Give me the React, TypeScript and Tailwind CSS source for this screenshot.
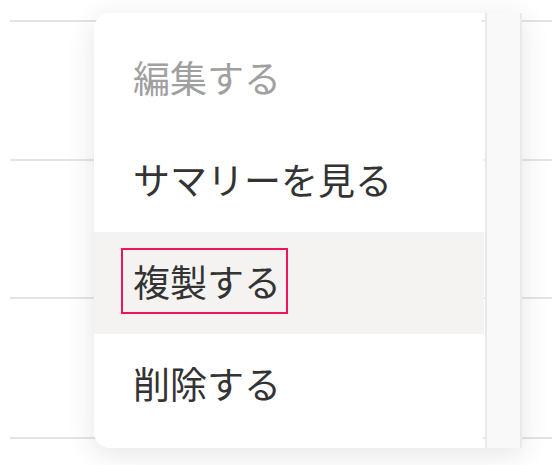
export default function App() {
  const items = [
    { label: "編集する", disabled: true },
    { label: "サマリーを見る" },
    { label: "複製する", focused: true },
    { label: "削除する" },
  ];

  return (
    <div
      className="relative w-[552px] h-[465px] overflow-hidden bg-white"
      style={{ fontFamily: '"Noto Sans CJK JP", "Noto Sans", sans-serif' }}
    >
      {/* background list rows */}
      <div className="pl-[10px] pt-[20px] flex flex-col">
        <div className="h-[2px] bg-[#e4e4e6]" />
        <div className="h-[137px]" />
        <div className="h-[2px] bg-[#e4e4e6]" />
        <div className="h-[136px]" />
        <div className="h-[2px] bg-[#e4e4e6]" />
        <div className="h-[138px]" />
        <div className="h-[2px] bg-[#e4e4e6]" />
      </div>

      {/* popover menu */}
      <div className="absolute left-[94px] top-[13px] flex h-[435px] shadow-[0_6px_28px_rgba(40,40,60,0.12)] rounded-l-2xl">
        <div className="w-[390px] bg-white rounded-2xl pt-[15px] pb-[12px] flex flex-col">
          {items.map((item) => (
            <div
              key={item.label}
              className={`h-[102px] flex items-center pl-[27px] pb-[4px] ${item.focused ? "bg-[#f4f3f2]" : ""}`}
            >
              <span
                className={`border-2 pl-[10px] pr-[5px] py-[6px] text-[37px] leading-[50px] ${
                  item.focused ? "border-[#f0145a]" : "border-transparent"
                } ${item.disabled ? "text-[#a0a0a0]" : "text-[#333333]"}`}
              >
                {item.label}
              </span>
            </div>
          ))}
        </div>
        <div className="w-[37px] bg-[#f9f9f9] border-l-2 border-r-2 border-[#e9e9eb] ml-px" />
      </div>
    </div>
  );
}
